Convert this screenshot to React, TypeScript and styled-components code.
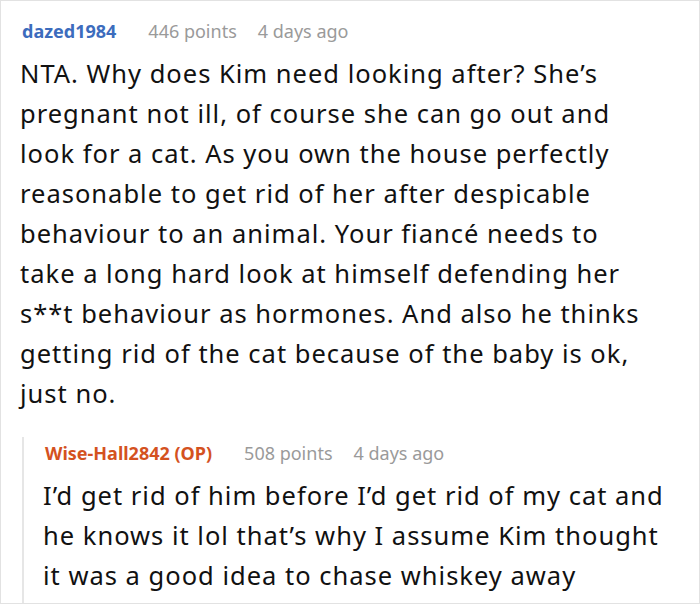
import React from "react";
import styled, { createGlobalStyle } from "styled-components";

const Global = createGlobalStyle`
  html, body { margin: 0; padding: 0; background: #fff; }
  body { font-family: "Noto Sans", "Open Sans", sans-serif; }
`;

const Frame = styled.div`
  width: 700px;
  height: 604px;
  box-sizing: border-box;
  border: 1px solid #e2e2e2;
  padding: 18px 0 0 19px;
  overflow: hidden;
  background: #fff;
`;

const Comment = styled.div`
  display: flex;
  flex-direction: column;
`;

const Header = styled.div`
  display: flex;
  align-items: baseline;
  gap: 32px;
  font-size: 18px;
  line-height: 24px;
  height: 24px;
  padding-left: 2px;
`;

const Author = styled.span<{ $op?: boolean }>`
  font-weight: 700;
  color: ${(p) => (p.$op ? "#d4521f" : "#3c6cbd")};
`;

const Meta = styled.span`
  color: #9a9a9a;
  margin-right: -11px;
`;

const Body = styled.div`
  margin-top: 10px;
  font-size: 25.5px;
  letter-spacing: 1px;
  line-height: 40px;
  color: #111;
  width: 670px;
  white-space: nowrap;
`;

const Reply = styled.div`
  margin-top: 24px;
  margin-left: 2px;
  border-left: 2px solid #e6e6e6;
  padding: 4px 0 12px 19px;
  display: flex;
  flex-direction: column;
`;

export default function App() {
  return (
    <>
      <Global />
      <Frame>
        <Comment>
          <Header>
            <Author>dazed1984</Author>
            <Meta>446 points</Meta>
            <Meta>4 days ago</Meta>
          </Header>
          <Body>
            NTA. Why does Kim need looking after? She’s
            <br />
            pregnant not ill, of course she can go out and
            <br />
            look for a cat. As you own the house perfectly
            <br />
            reasonable to get rid of her after despicable
            <br />
            behaviour to an animal. Your fiancé needs to
            <br />
            take a long hard look at himself defending her
            <br />
            s**t behaviour as hormones. And also he thinks
            <br />
            getting rid of the cat because of the baby is ok,
            <br />
            just no.
          </Body>
          <Reply>
            <Header>
              <Author $op>Wise-Hall2842 (OP)</Author>
              <Meta>508 points</Meta>
              <Meta>4 days ago</Meta>
            </Header>
            <Body>
              I’d get rid of him before I’d get rid of my cat and
              <br />
              he knows it lol that’s why I assume Kim thought
              <br />
              it was a good idea to chase whiskey away
            </Body>
          </Reply>
        </Comment>
      </Frame>
    </>
  );
}
